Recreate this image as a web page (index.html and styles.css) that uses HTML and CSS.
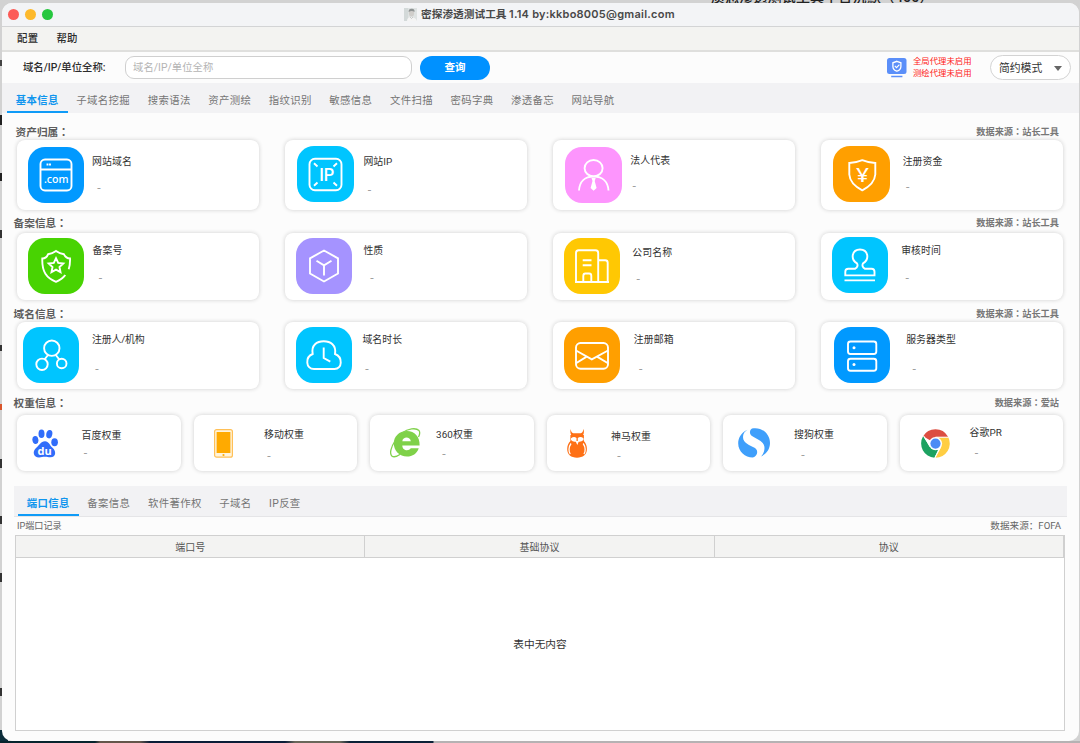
FILE: index.html
```html
<!DOCTYPE html>
<html lang="zh-CN">
<head>
<meta charset="utf-8">
<title>密探渗透测试工具 1.14</title>
<link rel="stylesheet" href="styles.css">
</head>
<body>
<div class="desktop">
  <div class="behind">质您渗透测试工具中台沉默（455）</div>
  <div class="window">
    <header class="titlebar">
      <div class="lights"><i class="red"></i><i class="amber"></i><i class="green"></i></div>
      <div class="title">
        <svg class="avatar" viewBox="0 0 13 13"><rect width="13" height="13" fill="#dfe3e3"/><path d="M0 0H4V13H0Z" fill="#d3d9d9"/><path d="M3 13C3 10 5 9 7 9s5 1 6 4Z" fill="#f4f4f4"/><ellipse cx="7.500" cy="5" rx="2.600" ry="3.600" fill="#d0cecb"/><path d="M4.600 4C4.500 1 6 .5 8 .7s3 1.500 2.400 3.300C9 2.800 7 2.500 4.600 4Z" fill="#8f9494"/><path d="M6 9l1.500 1.500L9 9" stroke="#a9adad" fill="none" stroke-width=".6"/></svg>
        <span>密探渗透测试工具 <b>1.14 by:kkbo8005@gmail.com</b></span>
      </div>
    </header>
    <nav class="menubar"><span>配置</span><span>帮助</span></nav>
    <div class="toolbar">
      <label class="query-label">域名/IP/单位全称:</label>
      <div class="query-input">域名/IP/单位全称</div>
      <div class="query-btn">查询</div>
      <svg class="proxy-icon" viewBox="0 0 20 20"><rect width="19.500" height="16" rx="2.500" fill="#5b8ff9"/><path d="M4.200 18.500h11.200" stroke="#5b8ff9" stroke-width="1.400"/><path d="M9.900 3.300l4 1.500v3.600c0 2.300-1.700 3.900-4 4.800-2.300-.9-4-2.500-4-4.800V4.800Z" fill="none" stroke="#fff" stroke-width="1.300"/><path d="M7.800 7.900l1.700 1.700 2.900-3" fill="none" stroke="#fff" stroke-width="1.200"/></svg>
      <div class="proxy-text"><span>全局代理未启用</span><span>测绘代理未启用</span></div>
      <div class="mode">简约模式<i class="caret"></i></div>
    </div>
    <nav class="tabs main-tabs">
      <span class="tab active">基本信息</span><span class="tab">子域名挖掘</span><span class="tab">搜索语法</span><span class="tab">资产测绘</span><span class="tab">指纹识别</span><span class="tab">敏感信息</span><span class="tab">文件扫描</span><span class="tab">密码字典</span><span class="tab">渗透备忘</span><span class="tab">网站导航</span>
    </nav>
    <main class="content">
      <div class="head head-asset"><span class="label">资产归属<i lang="zh-TW">：</i></span><span class="source">数据来源<i lang="zh-TW">：</i>站长工具</span></div>
      <section class="cards asset">
        <div class="card domain">
          <svg class="tile blue" viewBox="0 0 56 56"><rect x="12.500" y="12.500" width="31" height="31" rx="4.500"/><path d="M12.500 22.500h31M19.500 16.500v2M22 16.500v2"/><text x="28.200" y="36.300" textLength="24.500" lengthAdjust="spacingAndGlyphs" font-size="11.500">.com</text></svg>
          <div class="info"><h3>网站域名</h3><p>-</p></div>
        </div>
        <div class="card ip">
          <svg class="tile cyan" viewBox="0 0 57 56"><rect x="12.500" y="12.800" width="32" height="31.400" rx="5.500"/><path d="M17 17.200l3.500 3.300M40 17.200l-3.500 3.300M17 39.800l3.500-3.300M40 39.800l-3.500-3.300"/><text class="ip-mark" x="29.700" y="34.800" textLength="15" lengthAdjust="spacingAndGlyphs" font-size="18.500">IP</text></svg>
          <div class="info"><h3>网站IP</h3><p>-</p></div>
        </div>
        <div class="card person">
          <svg class="tile pink" viewBox="0 0 57 56"><ellipse cx="28.600" cy="21.200" rx="9" ry="8.200"/><path d="M14 43.500C14.500 34.500 20 29.500 28.600 29.500S43 34.500 43.500 43.500"/><path class="solid" d="M26.500 31h4.200l-1 3 1.900 7-3 2.800-3-2.800 1.900-7Z"/></svg>
          <div class="info"><h3>法人代表</h3><p>-</p></div>
        </div>
        <div class="card capital">
          <svg class="tile orange" viewBox="0 0 57 56"><path d="M29.300 14.200Q36 17 42.300 17V28.500Q41.500 38 29.300 44.300Q17 38 16.300 28.500V17Q22.600 17 29.300 14.200Z"/><text x="29.400" y="35.500" textLength="13" lengthAdjust="spacingAndGlyphs" font-size="20">¥</text></svg>
          <div class="info"><h3>注册资金</h3><p>-</p></div>
        </div>
      </section>
      <div class="head head-icp"><span class="label">备案信息<i lang="zh-TW">：</i></span><span class="source">数据来源<i lang="zh-TW">：</i>站长工具</span></div>
      <section class="cards icp">
        <div class="card record">
          <svg class="tile green-bg" viewBox="0 0 56 56"><path d="M40.700 31.200C41.600 28.500 42.200 25 42 20.500C39 20.400 37.300 19 36 16.300C33 15.800 30.500 14.800 28 13C25.500 14.800 23 15.800 20 16.300C19 19 17 20.400 14.300 20.500C13.800 34 18.500 40 28 43.800C31.800 42.200 35 40.200 37.300 37"/><path d="M28 20.200l2.200 4.700 5.100.6-3.800 3.500 1 5.100-4.500-2.500-4.500 2.500 1-5.100-3.800-3.500 5.100-.6Z"/></svg>
          <div class="info"><h3>备案号</h3><p>-</p></div>
        </div>
        <div class="card nature">
          <svg class="tile purple" viewBox="0 0 56 56"><path d="M28 12.500L42 20.300V35.500L28 43.500 14 35.500V20.300ZM20.500 22.700L28 27.300 35.500 22.700M28 27.300V37.500"/></svg>
          <div class="info"><h3>性质</h3><p>-</p></div>
        </div>
        <div class="card company">
          <svg class="tile yellow" viewBox="0 0 56 56"><path d="M12 44V15q0-2.700 2.700-2.700H31.500q2.700 0 2.700 2.700V44M34.200 22.300h7q2.500 0 2.500 2.500V44M11 44H45M18.700 22.300h8.800M18.700 27.300h8.800M19.300 44v-6q0-2.500 2-2.500h4q2 0 2 2.500v6"/></svg>
          <div class="info"><h3>公司名称</h3><p>-</p></div>
        </div>
        <div class="card audit">
          <svg class="tile cyan" viewBox="0 0 56 56"><path d="M23.200 31.700C25.600 30.500 26 28 25 26.400C18 22 20 12.500 28 12.500S38 22 31 26.400C30 28 30.400 30.500 32.800 31.700H39.500q3 0 3 3V38.400H13.300V34.700q0-3 3-3ZM12.500 43.400h30.500"/></svg>
          <div class="info"><h3>审核时间</h3><p>-</p></div>
        </div>
      </section>
      <div class="head head-domain"><span class="label">域名信息<i lang="zh-TW">：</i></span><span class="source">数据来源<i lang="zh-TW">：</i>站长工具</span></div>
      <section class="cards whois">
        <div class="card registrant">
          <svg class="tile cyan" viewBox="0 0 56 56"><circle cx="28.800" cy="21.200" r="7.700"/><circle cx="19" cy="37.300" r="5.700"/><circle cx="38.700" cy="36.500" r="4.800"/><path d="M25 28l-3.500 4.500M32.800 28l3.500 4.500"/></svg>
          <div class="info"><h3>注册人/机构</h3><p>-</p></div>
        </div>
        <div class="card age">
          <svg class="tile cyan" viewBox="0 0 56 56"><path d="M18 42C9.500 42 9 30 16.700 27C15 18 21 14.300 27.700 14.300S40.500 18 39 27C47 30 46.500 42 38.500 42ZM27.700 20.500V31l6.600 3.700"/></svg>
          <div class="info"><h3>域名时长</h3><p>-</p></div>
        </div>
        <div class="card mail">
          <svg class="tile orange" viewBox="0 0 56 56"><rect x="12" y="16" width="32" height="25.700" rx="4.500"/><path d="M12 23.500l15.800 8.800L44 23.500M12 36.300l10.700-6.700M44 36.300L33 29.600"/></svg>
          <div class="info"><h3>注册邮箱</h3><p>-</p></div>
        </div>
        <div class="card server">
          <svg class="tile blue" viewBox="0 0 56 56"><rect x="14" y="14.500" width="28.300" height="12.500" rx="2.500"/><rect x="14" y="31.700" width="28.300" height="12" rx="2.500"/><circle class="solid" cx="20" cy="20.800" r="1.500"/><circle class="solid" cx="20" cy="37.600" r="1.500"/></svg>
          <div class="info"><h3>服务器类型</h3><p>-</p></div>
        </div>
      </section>
      <div class="head head-weight"><span class="label">权重信息<i lang="zh-TW">：</i></span><span class="source">数据来源<i lang="zh-TW">：</i>爱站</span></div>
      <section class="cards weight">
        <div class="card baidu">
          <svg class="logo" viewBox="0 0 26 29"><g fill="#316dfa"><ellipse cx="3.400" cy="11" rx="3" ry="4" transform="rotate(-10 3.400 11)"/><ellipse cx="9.500" cy="4.700" rx="3" ry="4.300"/><ellipse cx="17.300" cy="5.200" rx="3" ry="4.200" transform="rotate(12 17.300 5.200)"/><ellipse cx="22.600" cy="13.300" rx="3.300" ry="4"/><path d="M13 12.300c4 0 4.500 4 7.500 6.500 3.700 3 4 9.500-2 9.500-2.500 0-3-.5-5.500-.5s-3.500.7-6 .7c-5.500 0-7-6-3-9.500C7.500 16.500 8.500 12.300 13 12.300Z"/></g><text class="du" x="12.700" y="25.800">du</text></svg>
          <div class="info"><h3>百度权重</h3><p>-</p></div>
        </div>
        <div class="card mobile">
          <svg class="logo" viewBox="0 0 19 29"><rect x=".6" y=".6" width="17.800" height="27.600" rx="2" fill="#fff4dc" stroke="#ffc057" stroke-width="1.200"/><rect x="2.600" y="3" width="13.800" height="21" fill="#ffaa00"/><circle cx="9.500" cy="26" r="1.100" fill="#ffaa00"/></svg>
          <div class="info"><h3>移动权重</h3><p>-</p></div>
        </div>
        <div class="card so360">
          <svg class="logo" viewBox="0 0 31 30"><path d="M17 3C9 3 3.800 8.500 3.800 15.500S9.500 28.500 17 28.500c5.500 0 10-3 11.700-8.300H20.800c-2 3.300-8.500 2.600-8.500-2.700H29.600C30 8.500 24.500 3 17 3ZM12.300 13.200c.5-5 8-5 8.500 0Z" fill="#7fd149" fill-rule="evenodd"/><path d="M12 5C18 .5 26-.5 29 2.500c1 1.500.8 4-.5 6.500M5 13C1 19-.7 25.500 1.800 28c2 1.500 5.500.3 8.500-1.800" fill="none" stroke="#82d24e" stroke-width="1.300"/></svg>
          <div class="info"><h3>360权重</h3><p>-</p></div>
        </div>
        <div class="card shenma">
          <svg class="logo" viewBox="0 0 20 29"><path d="M3.700 0c-1 3 .1 6 1.500 7H15c1.600-1 2.700-4 1.300-7-.2 2.700-1 4-2.500 4.200H6.300C4.800 4 4 2.700 3.700 0Z" fill="#fe7015"/><path d="M3.400 6h13.500v6c2 2 3 5 3 8 0 5.500-4 8.700-9.900 8.700S.2 25.500.2 20c0-3 1-6 3.200-8Z" fill="#fe7015"/><path d="M4 9.300Q7 7 9.500 9v3.500Q6 13.500 4 11ZM10.800 9Q13.500 7 16.500 9.300V11Q14 13.500 10.800 12.500ZM8.500 12h3.500l-1.700 4Z" fill="#fff"/><path d="M4 14.500C1.500 18 1.500 23 3.300 25M16.200 14.500c2.500 3.500 2.500 8.500.7 10.500" stroke="#fff" fill="none" stroke-width="1.300"/></svg>
          <div class="info"><h3>神马权重</h3><p>-</p></div>
        </div>
        <div class="card sogou">
          <svg class="logo" viewBox="0 0 32 30"><g fill="#3f9ffb"><path d="M9.500 1.800C2.500 5 .2 10.500.2 15.500c0 8 7 14 14.500 14 4.500-1 6.300-6.500 2.300-9.500C12 17 5 15.500 5 9c0-3 1.500-5.500 4.500-7.200Z"/><path d="M14 .5c-2.500 1.500-3 5.500 0 7.500 5 3.500 12.500 5 12.500 12 0 3.500-1.500 6.500-3.500 8.500 6-2.700 9-8 9-13.500C32 6 24-1.500 14 .5Z"/></g></svg>
          <div class="info"><h3>搜狗权重</h3><p>-</p></div>
        </div>
        <div class="card google">
          <svg class="logo" viewBox="0 0 29 29"><path d="M14.500 14.500L2.100 7.300A14.300 14.300 0 0 1 26.900 7.500L27 8.200H14.500Z" fill="#dc4e41"/><path d="M14.500 8.200H27.300A14.300 14.300 0 0 1 14.600 28.800L20 17.700Z" fill="#ffce43"/><path d="M2.100 7.300L9 17.700 14.500 20.800 17 21 13.500 28.800A14.300 14.300 0 0 1 2.100 7.300Z" fill="#1da261"/><path d="M14.500 8.200H27.600M9 17.800L2.600 6.700M20 17.700L13.800 28.600" stroke="#fff" stroke-width="1"/><circle cx="14.500" cy="14.600" r="6.600" fill="#fff"/><circle cx="14.500" cy="14.600" r="5.100" fill="#4c8bf5"/></svg>
          <div class="info"><h3>谷歌PR</h3><p>-</p></div>
        </div>
      </section>
      <nav class="tabs sub-tabs">
        <span class="tab active">端口信息</span><span class="tab">备案信息</span><span class="tab">软件著作权</span><span class="tab">子域名</span><span class="tab">IP反查</span>
      </nav>
      <div class="table-head"><span>IP端口记录</span><span class="fofa">数据来源：FOFA</span></div>
      <div class="table">
        <div class="thead"><span>端口号</span><span>基础协议</span><span>协议</span></div>
        <div class="empty">表中无内容</div>
      </div>
    </main>
  </div>
</div>
</body>
</html>
```
FILE: styles.css
```css
* { box-sizing: border-box; }
body {
  margin: 0;
  font-family: "Roboto", "Noto Sans CJK SC", sans-serif;
  color: #333;
}
h3, p { margin: 0; font-weight: 400; }

.desktop {
  position: relative;
  width: 1080px;
  height: 743px;
  padding: 3px 1px 2px 2px;
  overflow: hidden;
  background:
    linear-gradient(90deg, #06242d 0 95px, #64564b 100px 140px, #0a1d38 150px 285px, #6a675a 295px 340px, #0b2137 350px 433px, #b5b2b3 434px) 0 741px / 100% 2px no-repeat,
    linear-gradient(#444, #444) 0 60px / 2px 6px no-repeat,
    linear-gradient(#222, #222) 0 115px / 2px 10px no-repeat,
    linear-gradient(#222, #222) 0 173px / 2px 8px no-repeat,
    linear-gradient(#333, #333) 0 230px / 2px 8px no-repeat,
    linear-gradient(#333, #333) 0 345px / 2px 6px no-repeat,
    linear-gradient(#d8552b, #d8552b) 0 404px / 2px 6px no-repeat,
    linear-gradient(#333, #333) 0 459px / 2px 9px no-repeat,
    linear-gradient(#333, #333) 0 516px / 2px 8px no-repeat,
    linear-gradient(#333, #333) 0 573px / 2px 9px no-repeat,
    linear-gradient(#333, #333) 0 688px / 2px 8px no-repeat,
    linear-gradient(#0b2c39, #0b2c39) 0 730px / 8px 13px no-repeat,
    #d2d2d2;
}
.behind {
  position: absolute;
  left: 711px;
  top: -11px;
  font-size: 14px;
  line-height: 16px;
  font-weight: 500;
  letter-spacing: .15px;
  white-space: nowrap;
  color: #222;
}
.window {
  position: relative;
  display: flex;
  flex-direction: column;
  height: 738px;
  border-radius: 10px;
  overflow: hidden;
  background: #fcfcfc;
}

.titlebar {
  display: grid;
  grid-template-columns: 388px 1fr;
  align-items: center;
  height: 24px;
  padding: 0 0 1px 6px;
  background: #f3f4f6;
  border-bottom: 1px solid #d3d4d5;
}
.lights { display: flex; gap: 6px; }
.lights i { width: 11px; height: 11px; border-radius: 50%; }
.red { background: #fc5b57; }
.amber { background: #fdb92c; }
.green { background: #26c73f; }
.title {
  display: flex;
  align-items: center;
  gap: 4px;
  padding-left: 8px;
  font: 700 10.7px/14px "Inter", "Noto Sans CJK SC", sans-serif;
  color: #484848;
  white-space: nowrap;
}
.title b { font-weight: 600; font-size: 11px; letter-spacing: .24px; }
.avatar { width: 13px; height: 13px; }

.menubar {
  display: flex;
  gap: 18px;
  height: 25px;
  padding: 0 15px;
  font-size: 10.4px;
  letter-spacing: .3px;
  line-height: 23px;
  background: #f3f3f1;
  border-bottom: 2px solid #dfdfdd;
}
.menubar, .query-label { color: #2c2c2c; font-weight: 500; }

.toolbar {
  display: flex;
  align-items: center;
  height: 31px;
  padding-left: 21px;
}
.query-label { width: 102px; font-size: 10.4px; white-space: nowrap; letter-spacing: -.02px; padding-bottom: 2px; }
.query-input {
  width: 287px;
  height: 23px;
  margin-bottom: 1px;
  padding-left: 7px;
  border: 1px solid #cfcfcf;
  border-radius: 9px;
  background: #fff;
  font-size: 10.3px;
  letter-spacing: .08px;
  line-height: 21px;
  color: #b4b4b4;
}
.query-btn {
  width: 70px;
  height: 24px;
  margin-left: 8px;
  border-radius: 12px;
  background: #0091ff;
  color: #fff;
  font-weight: 700;
  font-size: 10.5px;
  line-height: 23px;
  text-align: center;
}
.proxy-icon { width: 20px; height: 20px; margin-left: 397px; }
.proxy-text {
  display: flex;
  flex-direction: column;
  width: 83px;
  padding: 0 0 1px 6px;
  font-size: 8.4px;
  line-height: 12.4px;
  color: #ff2016;
  white-space: nowrap;
}
.mode {
  display: flex;
  align-items: center;
  justify-content: space-between;
  width: 81px;
  height: 25px;
  padding: 0 8px 1px;
  border: 1px solid #d3d3d3;
  border-radius: 13px;
  background: #fff;
  font-size: 10.8px;
  white-space: nowrap;
}
.caret { margin-top: 3px; border: 4px solid transparent; border-top: 5px solid #666; border-bottom: 0; }

.tabs { display: flex; background: #f2f2f4; }
.tab {
  padding: 0 8.8px;
  font-size: 10.4px;
  letter-spacing: .35px;
  color: #757575;
  white-space: nowrap;
}
.tab.active { color: #0f95ee; font-weight: 700; border-bottom: 2px solid #0f9bf7; }
.main-tabs { height: 30px; padding-left: 5px; line-height: 35px; }

.content { padding: 1px 12px 0 13px; }
.head {
  display: flex;
  justify-content: space-between;
  align-items: flex-end;
  padding: 0 8px 0 0;
  line-height: 14px;
}
.head i { font-style: normal; font-family: "Noto Sans CJK TC", sans-serif; }
.label { margin-left: -1.5px; font-size: 10.7px; color: #5d5d5d; font-weight: 700; }
.source { font-size: 9.2px; color: #777; font-weight: 700; }
.head-asset { height: 26px; padding-left: 2px; }
.head-icp { height: 23px; padding-bottom: 2px; }
.head-domain { height: 22px; }
.head-weight { height: 26px; padding-bottom: 4px; }
.head .source { padding-bottom: 1px; }

.cards { display: grid; grid-template-columns: repeat(4, 1fr); gap: 25.5px; padding: 0 4px 0 2px; }
.asset { height: 70px; }
.icp { height: 67px; }
.whois { height: 67px; }
.weight { grid-template-columns: repeat(6, 1fr); gap: 13px; height: 56px; }
.card {
  display: flex;
  align-items: flex-start;
  min-width: 0;
  padding: var(--iy) 0 0 var(--ix);
  border-radius: 8px;
  background: #fff;
  box-shadow: 0 0 4px #cfcfcf;
}
.tile {
  flex: none;
  width: var(--w, 56px);
  height: 56px;
  border-radius: 17px;
  fill: none;
  stroke: #fff;
  stroke-width: 1.9;
}
.tile text {
  fill: #fff;
  stroke: none;
  font-family: "Noto Sans", sans-serif;
  font-weight: 500;
  text-anchor: middle;
}
.tile .ip-mark { font-family: "Roboto", sans-serif; }
.tile .solid { fill: #fff; stroke: none; }
.blue { background: #0199ff; }
.cyan { background: #00c5ff; }
.pink { background: #fd95fd; }
.orange { background: #ff9f00; }
.green-bg { background: #48d302; }
.purple { background: #a593ff; }
.yellow { background: #ffc803; }
.logo { flex: none; width: var(--w); height: var(--h, 29px); }
.du { fill: #fff; font: 700 11px "Open Sans", sans-serif; text-anchor: middle; }
.info { margin: var(--ty) 0 0 var(--tx); line-height: 14px; }
.info h3 { height: 14px; padding-top: 1px; font-size: 9.9px; letter-spacing: .1px; line-height: 14px; white-space: nowrap; }
.info p { margin: var(--dy) 0 0 var(--dx); padding-top: 1px; font: 12px/14px "Noto Sans", sans-serif; color: #a0a0a0; }

.domain { --ix: 11px; --iy: 7px; --tx: 8px; --ty: 7px; --dx: 5px; --dy: 12px; }
.ip { --w: 57px; --ix: 12px; --iy: 6px; --tx: 9.5px; --ty: 8px; --dx: 4px; --dy: 14px; }
.person { --w: 57px; --ix: 12px; --iy: 7px; --tx: 8.5px; --ty: 6px; --dx: 2px; --dy: 11px; }
.capital { --w: 57px; --ix: 12px; --iy: 6px; --tx: 13px; --ty: 8px; --dx: 3px; --dy: 11px; }
.record { --ix: 11px; --iy: 5px; --tx: 8.5px; --ty: 5px; --dx: 6px; --dy: 13px; }
.nature { --ix: 11.5px; --iy: 5px; --tx: 11px; --ty: 5px; --dx: 6.5px; --dy: 13px; }
.company { --ix: 11.5px; --iy: 5px; --tx: 12px; --ty: 7px; --dx: 4px; --dy: 12px; }
.audit { --ix: 11px; --iy: 4px; --tx: 13.5px; --ty: 6px; --dx: 4px; --dy: 13px; }
.registrant { --ix: 6px; --iy: 5px; --tx: 13px; --ty: 5px; --dx: 3px; --dy: 15px; }
.registrant h3 { letter-spacing: -.15px; }
.age { --ix: 11.5px; --iy: 5px; --tx: 10px; --ty: 5px; --dx: 2.5px; --dy: 15px; }
.mail { --ix: 11.5px; --iy: 5px; --tx: 13.5px; --ty: 5px; --dx: 5px; --dy: 15px; }
.server { --ix: 13px; --iy: 5px; --tx: 16.5px; --ty: 5px; --dx: 6px; --dy: 15px; }
.baidu { --w: 26px; --ix: 15px; --iy: 14px; --tx: 23.5px; --ty: -1px; --dx: 2px; --dy: 3px; }
.mobile { --w: 19px; --ix: 20px; --iy: 14px; --tx: 31.5px; --ty: -2px; --dx: 3px; --dy: 7px; }
.so360 { --w: 31px; --h: 30px; --ix: 20px; --iy: 13px; --tx: 15px; --ty: -1px; --dx: 6px; --dy: 5px; }
.shenma { --w: 20px; --ix: 20px; --iy: 14px; --tx: 24.5px; --ty: 0px; --dx: 6px; --dy: 5px; }
.sogou { --w: 32px; --h: 30px; --ix: 15px; --iy: 13px; --tx: 24px; --ty: -1px; --dx: 7px; --dy: 6px; }
.google { --w: 29px; --ix: 21px; --iy: 14px; --tx: 20px; --ty: -4px; --dx: 5px; --dy: 6px; }

.sub-tabs {
  height: 31px;
  margin: 15px 0 0 -1px;
  padding-left: 4px;
  line-height: 35px;
  border-bottom: 1px solid #e5e5e7;
}
.table-head {
  display: flex;
  justify-content: space-between;
  height: 18px;
  padding: 0 6px 0 2px;
  font-size: 9.1px;
  line-height: 19px;
  color: #666;
}
.fofa { font-size: 9.6px; line-height: 17px; }
.table {
  display: flex;
  flex-direction: column;
  height: 196px;
  margin-right: 2px;
  border: 1px solid #d0d0d0;
  background: #fff;
}
.thead {
  display: grid;
  grid-template-columns: repeat(3, 1fr);
  grid-template-rows: 21px;
  height: 22px;
  font-size: 10px;
  line-height: 23px;
  text-align: center;
  color: #555;
  background: #f3f3f2;
  border-bottom: 1px solid #d0d0d0;
}
.thead span { border-right: 1px solid #d0d0d0; }
.empty {
  flex: 1;
  display: flex;
  align-items: center;
  justify-content: center;
  padding-bottom: 2px;
  font-size: 10.7px;
}
```
